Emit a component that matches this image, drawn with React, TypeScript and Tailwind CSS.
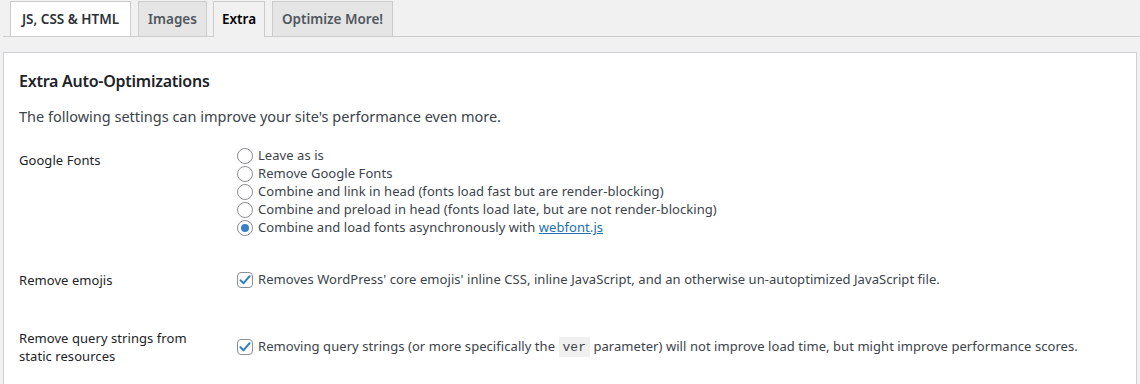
import React from "react";

const font = { fontFamily: '"Noto Sans", "Open Sans", sans-serif' };

function Radio({ checked }: { checked?: boolean }) {
  return (
    <span className="inline-flex h-[16px] w-[16px] shrink-0 items-center justify-center rounded-full border border-[#8c8f94] bg-white">
      {checked && <span className="h-[8px] w-[8px] rounded-full bg-[#3582c4]" />}
    </span>
  );
}

function Checkbox() {
  return (
    <span className="inline-flex h-[16px] w-[16px] shrink-0 items-center justify-center rounded-[4px] border border-[#8c8f94] bg-white">
      <svg width="14" height="14" viewBox="0 0 14 14">
        <path d="M2.5 7.3 L5.6 10.2 L11.6 3.2" fill="none" stroke="#2f7fc1" strokeWidth="2" strokeLinecap="round" strokeLinejoin="round" />
      </svg>
    </span>
  );
}

function RadioLine({ children, checked }: { children: React.ReactNode; checked?: boolean }) {
  return (
    <div className="flex h-[18px] items-center gap-[5px]">
      <Radio checked={checked} />
      <span className="whitespace-nowrap">{children}</span>
    </div>
  );
}

export default function App() {
  return (
    <div style={font} className="h-[384px] w-[1140px] overflow-hidden bg-[#f1f1f1] text-[13px] text-[#3c434a] tracking-[0.06px]">
      {/* tabs */}
      <div className="ml-[3px] flex h-[37px] border-b border-[#cccccc] pl-[7px] text-[13.5px] tracking-normal">
        <div className="mt-[1px] flex h-[36px] w-[121px] items-center justify-center border border-[#cccccc] bg-white font-semibold text-[#2c3338]">
          JS, CSS &amp; HTML
        </div>
        <div className="ml-[7px] mt-[1px] flex h-[36px] w-[69px] items-center justify-center border border-[#cccccc] bg-[#e5e5e5] font-semibold text-[#50575e]">
          Images
        </div>
        <div className="ml-[6px] mt-[1px] flex h-[36px] w-[52px] items-center justify-center border border-b-0 border-[#cccccc] bg-[#f1f1f1] font-semibold text-[#000]">
          Extra
        </div>
        <div className="ml-[7px] mt-[1px] flex h-[36px] w-[121px] items-center justify-center border border-[#cccccc] bg-[#e5e5e5] font-semibold text-[#50575e]">
          Optimize More!
        </div>
      </div>

      {/* panel */}
      <div className="mx-[3px] mt-[15px] h-[400px] border border-[#ccd0d4] bg-white px-[15px]">
        <h2 className="mt-[17px] text-[16px] font-semibold leading-[22px] tracking-[-0.25px] text-[#1d2327]">
          Extra Auto-Optimizations
        </h2>
        <p className="mt-[14px] text-[14.5px] leading-[20px] tracking-normal text-[#3c434a]">
          The following settings can improve your site's performance even more.
        </p>

        {/* Google Fonts */}
        <div className="mt-[21px] flex">
          <div className="w-[218px] shrink-0 pt-[4px] leading-[18px] text-[#1d2327]">Google Fonts</div>
          <div>
            <RadioLine>Leave as is</RadioLine>
            <RadioLine>Remove Google Fonts</RadioLine>
            <RadioLine>Combine and link in head (fonts load fast but are render-blocking)</RadioLine>
            <RadioLine>Combine and preload in head (fonts load late, but are not render-blocking)</RadioLine>
            <RadioLine checked>
              Combine and load fonts asynchronously with{" "}
              <a className="text-[#2271b1] underline">webfont.js</a>
            </RadioLine>
          </div>
        </div>

        {/* Remove emojis */}
        <div className="mt-[34px] flex">
          <div className="w-[218px] shrink-0 leading-[18px] text-[#1d2327]">Remove emojis</div>
          <div className="flex h-[18px] items-center gap-[5px]">
            <Checkbox />
            <span className="whitespace-nowrap">
              Removes WordPress' core emojis' inline CSS, inline JavaScript, and an otherwise un-autoptimized JavaScript file.
            </span>
          </div>
        </div>

        {/* Remove query strings */}
        <div className="mt-[40px] flex">
          <div className="w-[218px] shrink-0 leading-[18px] text-[#1d2327]">
            Remove query strings from
            <br />
            static resources
          </div>
          <div className="pt-[9px]">
            <div className="flex h-[18px] items-center gap-[5px]">
              <Checkbox />
              <span className="whitespace-nowrap">
                Removing query strings (or more specifically the{" "}
                <code
                  style={{ fontFamily: '"Liberation Mono", monospace' }}
                  className="bg-[#f0f0f1] px-[4px] pb-[2px] pt-[3px] text-[13px] tracking-normal"
                >
                  ver
                </code>{" "}
                parameter) will not improve load time, but might improve performance scores.
              </span>
            </div>
          </div>
        </div>
      </div>
    </div>
  );
}
